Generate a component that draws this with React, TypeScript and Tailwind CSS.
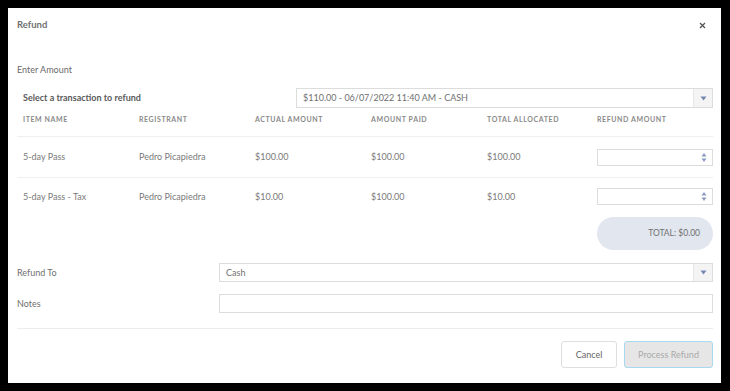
import React from "react";

const font = { fontFamily: "Lato, 'Open Sans', 'Noto Sans', sans-serif" };

function Caret() {
  return (
    <svg width="7" height="5" viewBox="0 0 7 5">
      <path d="M0.5 0.5 L6.5 0.5 L3.5 4.5 Z" fill="#7487b3" />
    </svg>
  );
}

function SelectBox({ text, className }: { text: string; className: string }) {
  return (
    <div className={`flex items-stretch border border-[#dcdcdc] bg-white ${className}`}>
      <div className="flex-1 flex items-center pl-[6px] text-[9px] text-[#707070]">{text}</div>
      <div className="w-[19px] flex items-center justify-center bg-[#f4f4f4] border-l border-[#e6e6e6]">
        <Caret />
      </div>
    </div>
  );
}

function NumberInput() {
  return (
    <div className="w-[116px] h-[17px] border border-[#dcdcdc] bg-white flex justify-end items-center pr-[5px]">
      <svg width="6" height="11" viewBox="0 0 6 11">
        <path d="M0.5 4.5 L5.5 4.5 L3 1 Z" fill="#8a9bc2" />
        <path d="M0.5 6.5 L5.5 6.5 L3 10 Z" fill="#8a9bc2" />
      </svg>
    </div>
  );
}

const cols = "grid grid-cols-[116px_116px_116px_116px_110px_116px]";

export default function App() {
  const rows = [
    ["5-day Pass", "Pedro Picapiedra", "$100.00", "$100.00", "$100.00"],
    ["5-day Pass - Tax", "Pedro Picapiedra", "$10.00", "$100.00", "$10.00"],
  ];
  return (
    <div className="w-[730px] h-[391px] bg-black pt-[8px] pl-[8px]" style={font}>
      <div className="w-[713px] h-[375px] bg-white pl-[9px] pr-[8px] flex flex-col">
        <div className="h-[34px] flex items-center justify-between">
          <span className="text-[9.5px] font-bold text-[#707070]">Refund</span>
          <svg width="7" height="7" viewBox="0 0 7 7" className="mr-[7px]">
            <path d="M1 1 L6 6 M6 1 L1 6" stroke="#555" strokeWidth="1.3" />
          </svg>
        </div>
        <div className="mt-[20px] h-[16px] flex items-center text-[9px] text-[#6a6a6a]">Enter Amount</div>
        <div className="mt-[10px] h-[20px] flex items-center">
          <div className="w-[279px] pl-[6px] text-[9px] font-bold text-[#5a5a5a]">Select a transaction to refund</div>
          <SelectBox text="$110.00 - 06/07/2022 11:40 AM - CASH" className="flex-1 h-[20px]" />
        </div>
        <div className={`${cols} h-[29px] pb-[6px] pl-[6px] items-center border-b border-[#eef0f0] text-[7px] font-bold tracking-[0.6px] text-[#8a8a8a]`}>
          <div>ITEM NAME</div>
          <div>REGISTRANT</div>
          <div>ACTUAL AMOUNT</div>
          <div>AMOUNT PAID</div>
          <div>TOTAL ALLOCATED</div>
          <div>REFUND AMOUNT</div>
        </div>
        {rows.map((r, i) => (
          <div
            key={i}
            className={`${cols} pl-[6px] items-center text-[9px] text-[#7a7a7a] ${i === 0 ? "h-[41px] border-b border-[#eef0f0]" : "h-[37px]"}`}
          >
            {r.map((c, j) => (
              <div key={j}>{c}</div>
            ))}
            <NumberInput />
          </div>
        ))}
        <div className="mt-[2px] flex justify-end">
          <div className="w-[116px] h-[33px] rounded-full bg-[#e1e6ef] flex items-center justify-end pr-[13px] text-[8.5px] text-[#707070]">
            TOTAL: $0.00
          </div>
        </div>
        <div className="mt-[13px] h-[19px] flex items-center">
          <div className="w-[202px] text-[9px] text-[#707070]">Refund To</div>
          <SelectBox text="Cash" className="flex-1 h-[19px]" />
        </div>
        <div className="mt-[12px] h-[19px] flex items-center">
          <div className="w-[202px] text-[9px] text-[#707070]">Notes</div>
          <div className="flex-1 h-[19px] border border-[#dcdcdc]" />
        </div>
        <div className="mt-[15px] border-t border-[#eceeee]" />
        <div className="mt-[12px] flex justify-end gap-[7px]">
          <button className="w-[56px] h-[27px] rounded-[3px] border border-[#dedede] bg-white text-[9px] text-[#666]">Cancel</button>
          <button className="w-[89px] h-[27px] rounded-[3px] border border-[#a9d9f0] bg-[#e6e6e6] text-[9px] text-[#aaa]">Process Refund</button>
        </div>
      </div>
    </div>
  );
}
